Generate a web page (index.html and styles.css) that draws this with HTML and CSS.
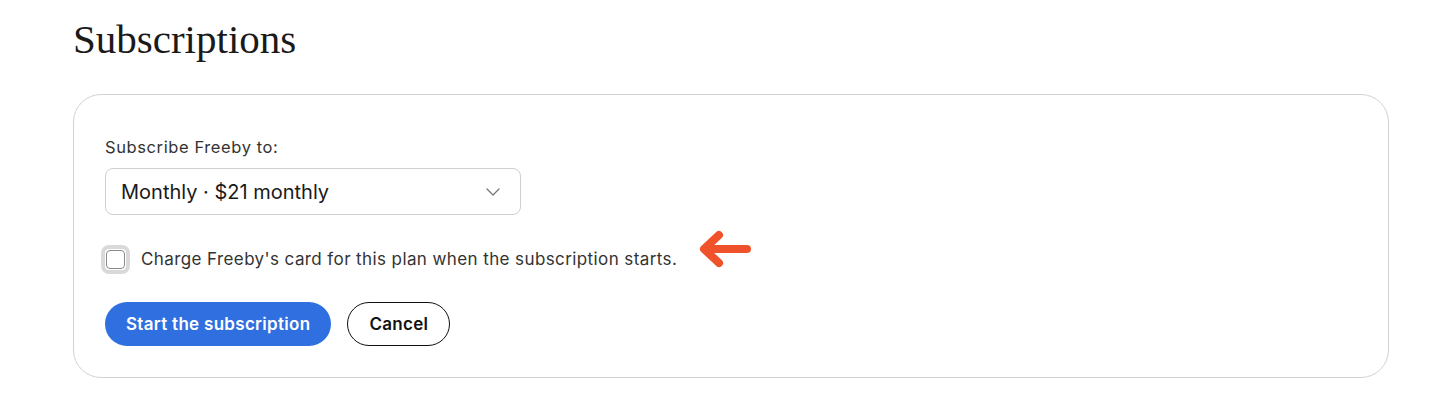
FILE: index.html
```html
<!DOCTYPE html>
<html lang="en">
<head>
	<meta charset="UTF-8">
	<title>Subscriptions</title>
	<link rel="stylesheet" href="styles.css">
</head>
<body>

<div class="page">
	<h1 class="page-title">Subscriptions</h1>

	<form class="card">
		<label class="field-label" for="plan">Subscribe Freeby to:</label>
		<div class="select">
			<span class="select-value">Monthly · $21 monthly</span>
			<svg class="select-chevron" width="14" height="8" viewBox="0 0 14 8">
				<path d="M1 1l6 6 6-6" fill="none" stroke="#777" stroke-width="1.3" stroke-linecap="round" stroke-linejoin="round"/>
			</svg>
		</div>

		<div class="check-row">
			<span class="checkbox"><span class="checkbox-box"></span></span>
			<span class="check-text">Charge Freeby's card for this plan when the subscription starts.</span>
			<svg class="hint-arrow" width="56" height="42" viewBox="0 0 56 42">
				<path d="M50 21H8M22 7L7 21l15 14" fill="none" stroke="#f0532b" stroke-width="8" stroke-linecap="round" stroke-linejoin="round"/>
			</svg>
		</div>

		<div class="actions">
			<button type="button" class="btn btn-primary">Start the subscription</button>
			<button type="button" class="btn btn-outline">Cancel</button>
		</div>
	</form>
</div>

</body>
</html>
```

FILE: styles.css
```css
body {
	margin: 0;
	padding: 0;
	background: #fff;
	color: #222;
	font-family: Inter, "Noto Sans", sans-serif;
}

.page {
	padding: 15px 51px 0 73px;
}

.page-title {
	margin: 0 0 31px 0;
	font-family: "Liberation Serif", "DejaVu Serif", serif;
	font-weight: 400;
	font-size: 41px;
	line-height: 48px;
	color: #1a1a1a;
}

.card {
	border: 1px solid #d2d2d2;
	border-radius: 28px;
	padding: 40px 31px 31px 31px;
}

.field-label {
	display: block;
	font-size: 16.5px;
	letter-spacing: 0.6px;
	line-height: 24px;
	color: #333;
	margin-bottom: 9px;
}

.select {
	width: 416px;
	height: 47px;
	box-sizing: border-box;
	border: 1px solid #cfcfcf;
	border-radius: 8px;
	padding: 0 20px 0 15px;
	display: flex;
	align-items: center;
	justify-content: space-between;
}

.select-value {
	font-size: 20px;
	color: #1a1a1a;
}

.check-row {
	display: flex;
	align-items: center;
	margin-top: 29px;
	height: 30px;
}

.checkbox {
	width: 29px;
	height: 29px;
	box-sizing: border-box;
	margin-left: -4px;
	border: 4px solid #d9d9d9;
	border-radius: 8px;
	display: flex;
	align-items: center;
	justify-content: center;
}

.checkbox-box {
	width: 19px;
	height: 19px;
	box-sizing: border-box;
	border: 1px solid #8a8a8a;
	border-radius: 4px;
}

.check-text {
	margin-left: 11px;
	font-size: 17px;
	letter-spacing: 0.4px;
	color: #333;
}

.hint-arrow {
	margin-left: 20px;
	margin-top: -20px;
}

.actions {
	display: flex;
	gap: 16px;
	margin-top: 28px;
}

.btn {
	height: 44px;
	border-radius: 22px;
	font-family: Inter, "Noto Sans", sans-serif;
	font-weight: 600;
	font-size: 17px;
	letter-spacing: 0.3px;
	padding: 0 21px;
	cursor: pointer;
}

.btn-primary {
	background: #2f6fe0;
	border: none;
	color: #fff;
}

.btn-outline {
	background: #fff;
	border: 1px solid #111;
	color: #111;
}
```
